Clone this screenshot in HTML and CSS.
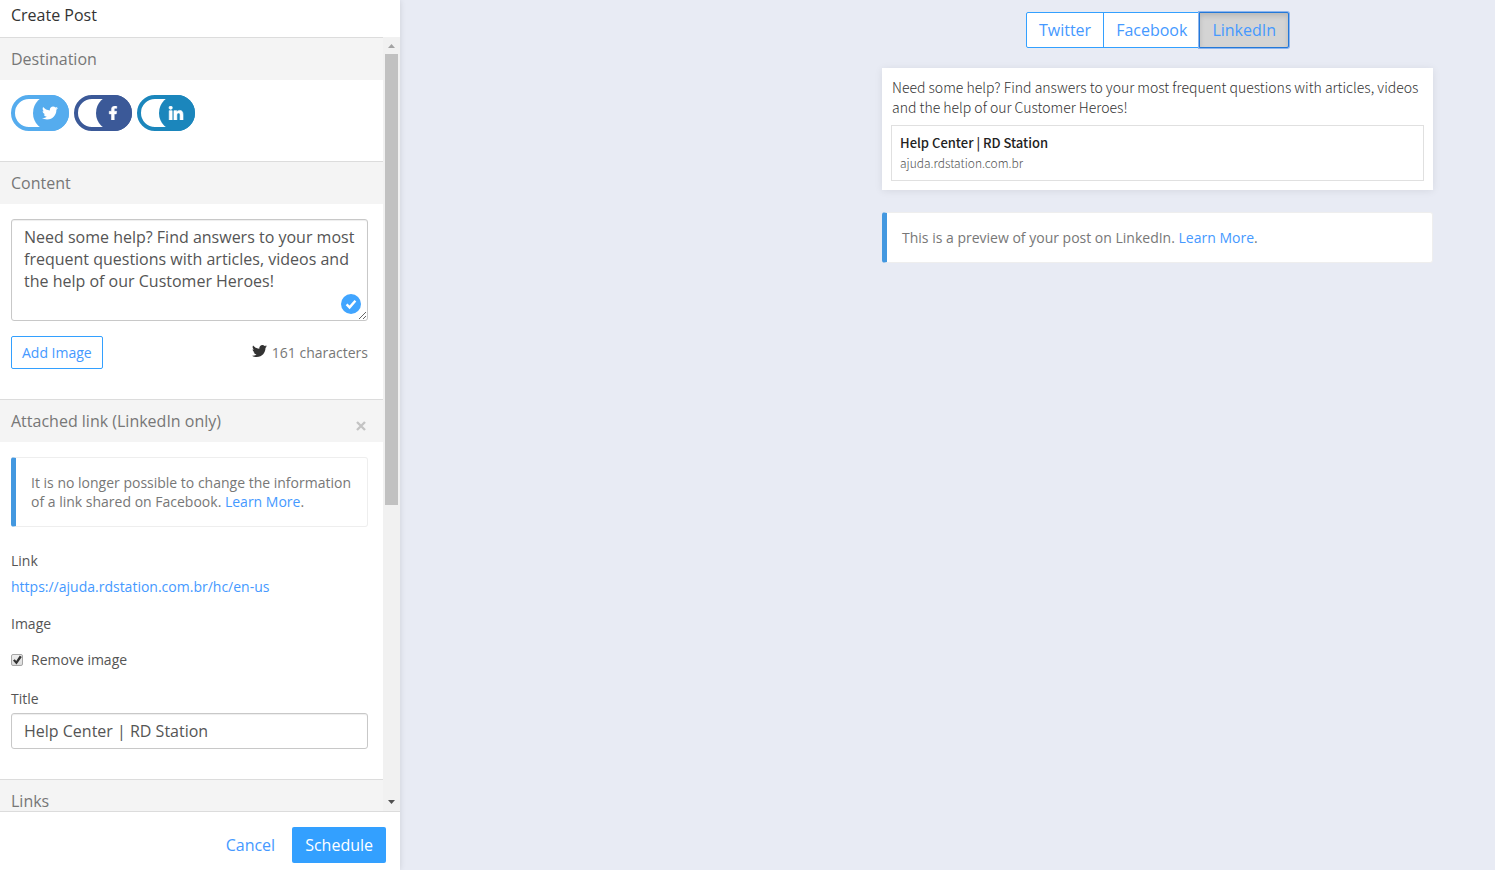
FILE: index.html
```html
<!DOCTYPE html>
<html lang="en">
<head>
    <meta charset="UTF-8">
    <meta name="viewport" content="width=device-width, initial-scale=1.0">
    <title>Create Post</title>
    <link rel="stylesheet" href="styles.css">
</head>
<body>
    <svg class="sprite" aria-hidden="true">
        <symbol id="icon-twitter" viewBox="0 0 512 512">
            <path d="M459.37 151.716c.325 4.548.325 9.097.325 13.645 0 138.72-105.583 298.558-298.558 298.558-59.452 0-114.68-17.219-161.137-47.106 8.447.974 16.568 1.299 25.34 1.299 49.055 0 94.213-16.568 130.274-44.832-46.132-.975-84.792-31.188-98.112-72.772 6.498.974 12.995 1.624 19.818 1.624 9.421 0 18.843-1.3 27.614-3.573-48.081-9.747-84.143-51.98-84.143-102.985v-1.299c13.969 7.797 30.214 12.67 47.431 13.319-28.264-18.843-46.781-51.005-46.781-87.391 0-19.492 5.197-37.36 14.294-52.954 51.655 63.675 129.3 105.258 216.365 109.807-1.624-7.797-2.599-15.918-2.599-24.04 0-57.828 46.782-104.934 104.934-104.934 30.213 0 57.502 12.67 76.67 33.137 23.715-4.548 46.456-13.32 66.599-25.34-7.798 24.366-24.366 44.833-46.132 57.827 21.117-2.273 41.584-8.122 60.426-16.243-14.292 20.791-32.161 39.308-52.628 54.253z"/>
        </symbol>
        <symbol id="icon-facebook" viewBox="0 0 320 512">
            <path d="M279.14 288l14.22-92.66h-88.91v-60.13c0-25.35 12.42-50.06 52.24-50.06h40.42V6.26S260.43 0 225.36 0c-73.22 0-121.08 44.38-121.08 124.72v70.62H22.89V288h81.39v224h100.17V288z"/>
        </symbol>
        <symbol id="icon-linkedin" viewBox="0 0 448 448">
            <path d="M100.28 448H7.4V148.9h92.88zM53.79 108.1C24.09 108.1 0 83.5 0 53.8a53.79 53.79 0 0 1 107.58 0c0 29.7-24.1 54.3-53.79 54.3zM447.9 448h-92.68V302.4c0-34.7-.7-79.2-48.29-79.2-48.29 0-55.69 37.7-55.69 76.7V448h-92.78V148.9h89.08v40.8h1.3c12.4-23.5 42.69-48.3 87.88-48.3 94 0 111.28 61.9 111.28 142.3V448z"/>
        </symbol>
    </svg>

    <div class="app">
        <aside class="sidebar">
            <h1 class="sidebar-title">Create Post</h1>

            <div class="sidebar-body">
                <form class="sidebar-scroll" id="post-form">
                    <section class="section">
                        <h2 class="section-head">Destination</h2>
                        <div class="section-content destinations">
                            <label class="toggle toggle-twitter">
                                <input type="checkbox" aria-label="Twitter" checked>
                                <span class="knob"><svg class="icon-tw"><use href="#icon-twitter"/></svg></span>
                            </label>
                            <label class="toggle toggle-facebook">
                                <input type="checkbox" aria-label="Facebook" checked>
                                <span class="knob"><svg class="icon-fb"><use href="#icon-facebook"/></svg></span>
                            </label>
                            <label class="toggle toggle-linkedin">
                                <input type="checkbox" aria-label="LinkedIn" checked>
                                <span class="knob"><svg class="icon-in"><use href="#icon-linkedin"/></svg></span>
                            </label>
                        </div>
                    </section>

                    <section class="section">
                        <h2 class="section-head">Content</h2>
                        <div class="section-content">
                            <div class="message">
                                <textarea class="form-control message-text" aria-label="Content">Need some help? Find answers to your most frequent questions with articles, videos and the help of our Customer Heroes!</textarea>
                                <svg class="message-check" viewBox="0 0 20 20" aria-hidden="true">
                                    <circle cx="10" cy="10" r="10"/>
                                    <path d="M5.6 10.4l3 3 5.8-6.6"/>
                                </svg>
                            </div>
                            <div class="message-bar">
                                <button type="button" class="btn btn-outline btn-small">Add Image</button>
                                <span class="counter"><svg class="icon-tw"><use href="#icon-twitter"/></svg>161 characters</span>
                            </div>
                        </div>
                    </section>

                    <section class="section">
                        <div class="section-head">
                            <h2 class="section-name">Attached link (LinkedIn only)</h2>
                            <button type="button" class="close" aria-label="Remove attached link">
                                <svg viewBox="0 0 10 10"><path d="M1 1l8 8M9 1l-8 8"/></svg>
                            </button>
                        </div>
                        <div class="section-content">
                            <div class="notice">It is no longer possible to change the information of a link shared on Facebook. <a href="#">Learn More</a>.</div>
                            <div class="field field-link">
                                <span>Link</span>
                                <a href="#">https://ajuda.rdstation.com.br/hc/en-us</a>
                            </div>
                            <div class="field field-image">
                                <span>Image</span>
                                <label class="check"><input type="checkbox" checked>Remove image</label>
                            </div>
                            <div class="field field-title">
                                <label for="link-title">Title</label>
                                <input type="text" class="form-control" id="link-title" value="Help Center | RD Station">
                            </div>
                        </div>
                    </section>

                    <section class="section">
                        <h2 class="section-head">Links</h2>
                    </section>
                </form>

                <div class="scrollbar" aria-hidden="true">
                    <svg class="scroll-arrow scroll-up" viewBox="0 0 17 17"><path d="M5 11h7l-3.500-4z"/></svg>
                    <div class="scroll-track"><div class="scroll-thumb"></div></div>
                    <svg class="scroll-arrow" viewBox="0 0 17 17"><path d="M5 6h7l-3.500 4z"/></svg>
                </div>
            </div>

            <div class="sidebar-footer">
                <button type="button" class="btn btn-link">Cancel</button>
                <button type="submit" class="btn btn-primary" form="post-form">Schedule</button>
            </div>
        </aside>

        <main class="preview">
            <div class="preview-column">
                <div class="btn-group">
                    <button type="button" class="btn btn-outline">Twitter</button>
                    <button type="button" class="btn btn-outline">Facebook</button>
                    <button type="button" class="btn btn-outline active">LinkedIn</button>
                </div>

                <article class="post">
                    <p class="post-text">Need some help? Find answers to your most frequent questions with articles, videos and the help of our Customer Heroes!</p>
                    <div class="post-link">
                        <strong class="post-link-title">Help Center | RD Station</strong>
                        <span class="post-link-domain">ajuda.rdstation.com.br</span>
                    </div>
                </article>

                <div class="notice">This is a preview of your post on LinkedIn. <a href="#">Learn More</a>.</div>
            </div>
        </main>
    </div>
</body>
</html>
```

FILE: styles.css
```css
* {
    box-sizing: border-box;
}
body {
    margin: 0;
    font-family: 'Open Sans', sans-serif;
    font-size: 14px;
    line-height: 20px;
    color: #555;
    background: #e8ebf4;
}
h1, h2, p {
    margin: 0;
    font-weight: 400;
}
a {
    color: #4599ff;
    text-decoration: none;
}
button, input, textarea {
    font-family: inherit;
    margin: 0;
}
.sprite {
    display: none;
}
.app {
    display: flex;
    height: 100vh;
}

/* Sidebar */
.sidebar {
    display: flex;
    flex-direction: column;
    flex: none;
    width: 400px;
    background: #fff;
    box-shadow: 0 0 6px rgba(0, 0, 0, 0.12);
}
.sidebar-title {
    padding: 4px 11px 11px;
    font-size: 16px;
    line-height: 22px;
    color: #333;
}
.sidebar-body {
    display: flex;
    flex: 1;
    min-height: 0;
}
.sidebar-scroll {
    flex: 1;
    overflow-y: auto;
    scrollbar-width: none;
}
.section {
    border-top: 1px solid #dcdcdc;
}
.section-head {
    display: flex;
    align-items: center;
    justify-content: space-between;
    height: 42px;
    padding: 0 16px 0 11px;
    background: #f4f4f4;
    font-size: 16px;
    color: #777;
}
.section-name {
    font-size: 16px;
}
.section-content {
    padding: 15px 15px 30px 11px;
}
.close {
    display: flex;
    padding: 9px 1px 0;
    border: 0;
    background: none;
    cursor: pointer;
}
.close svg {
    width: 10px;
    height: 10px;
    fill: none;
    stroke: #c3c3c3;
    stroke-width: 2.4;
}

/* Destination toggles */
.destinations {
    display: flex;
    gap: 5px;
}
.toggle {
    display: flex;
    justify-content: flex-end;
    align-items: center;
    position: relative;
    width: 58px;
    height: 36px;
    border: 4px solid;
    border-radius: 18px;
    cursor: pointer;
}
.toggle input {
    position: absolute;
    inset: 0;
    appearance: none;
}
.toggle-twitter {
    color: #55acee;
}
.toggle-facebook {
    color: #3b5998;
}
.toggle-linkedin {
    color: #1b86bc;
}
.knob {
    display: flex;
    align-items: center;
    justify-content: center;
    flex: none;
    width: 36px;
    height: 36px;
    margin-right: -4px;
    padding-right: 2px;
    border-radius: 50%;
    background: currentColor;
}
.knob svg {
    fill: #fff;
}
.icon-tw {
    width: 16px;
    height: 16px;
}
.icon-fb {
    width: 10px;
    height: 14px;
    stroke: #fff;
    stroke-width: 20;
}
.icon-in {
    width: 16px;
    height: 14px;
    stroke: #fff;
    stroke-width: 20;
}

/* Form controls */
.form-control {
    display: block;
    width: 100%;
    height: 36px;
    padding: 6px 12px;
    border: 1px solid #c8c8c8;
    border-radius: 3px;
    background: #fff;
    box-shadow: inset 0 1px 1px rgba(0, 0, 0, 0.07);
    font-size: 16px;
    line-height: 22px;
    color: #555;
    outline: none;
}
.message {
    position: relative;
}
.message-text {
    height: 102px;
    resize: vertical;
}
.message-check {
    position: absolute;
    right: 7px;
    bottom: 7px;
    width: 20px;
    height: 20px;
    fill: #41a5ff;
}
.message-check path {
    fill: none;
    stroke: #fff;
    stroke-width: 2.4;
}
.message-bar {
    display: flex;
    align-items: center;
    justify-content: space-between;
    margin-top: 15px;
}
.counter {
    display: flex;
    gap: 5px;
    color: #777;
}
.counter svg {
    width: 15px;
    fill: #333;
}
.field {
    display: flex;
    flex-direction: column;
}
.field-link {
    gap: 6px;
    margin-top: 24px;
}
.field-image {
    gap: 16px;
    margin-top: 17px;
}
.field-title {
    gap: 4px;
    margin-top: 19px;
}
.check {
    display: flex;
    align-items: center;
    gap: 8px;
}
.check input {
    display: grid;
    width: 12px;
    height: 12px;
    border: 1px solid #a5a5a5;
    border-radius: 2px;
    background: linear-gradient(#efefef, #dcdcdc);
    appearance: none;
}
.check input:checked::before {
    content: "";
    background: #333;
    clip-path: polygon(10% 55%, 28% 42%, 42% 60%, 78% 5%, 98% 20%, 45% 95%);
}

/* Buttons */
.btn {
    height: 36px;
    padding: 0 12px;
    border: 1px solid transparent;
    border-radius: 2px;
    background: none;
    font-size: 16px;
    line-height: 22px;
    color: #4599ff;
    cursor: pointer;
}
.btn-outline {
    border-color: #33a0ff;
    background: #fff;
}
.btn-small {
    height: 33px;
    padding: 0 10px;
    font-size: 14px;
}
.btn-primary {
    background: #33a0ff;
    color: #fff;
}
.btn-group {
    display: flex;
    justify-content: center;
}
.btn-group .btn {
    border-radius: 0;
}
.btn-group .btn + .btn {
    margin-left: -1px;
}
.btn-group .btn:first-child {
    border-radius: 2px 0 0 2px;
}
.btn-group .btn:last-child {
    border-radius: 0 2px 2px 0;
}
.btn-group .active {
    border-color: #2378d8;
    background: #d4d4d4;
    box-shadow: inset 0 3px 5px rgba(0, 0, 0, 0.125), 0 0 0 1px #8db5ee;
}

/* Drawn scrollbar */
.scrollbar {
    display: flex;
    flex-direction: column;
    width: 17px;
    background: #f1f1f1;
}
.scroll-arrow {
    width: 17px;
    height: 17px;
    fill: #505050;
}
.scroll-up {
    fill: #a3a3a3;
}
.scroll-track {
    flex: 1;
    padding: 0 2px;
}
.scroll-thumb {
    height: 61%;
    background: #c1c1c1;
}
.sidebar-footer {
    display: flex;
    justify-content: flex-end;
    gap: 4px;
    padding: 15px 14px 7px;
    border-top: 1px solid #dcdcdc;
}

/* Notice */
.notice {
    padding: 15px;
    border: 1px solid #eee;
    border-left: 5px solid #4398e0;
    border-radius: 3px;
    background: #fff;
    line-height: 19px;
    color: #777;
}

/* Preview */
.preview {
    flex: 1;
    padding: 12px 0 0 420px;
}
.preview-column {
    max-width: 551px;
    margin: 0 auto;
}
.post {
    margin: 20px 0 22px;
    padding: 9px;
    background: #fff;
    box-shadow: 0 1px 8px rgba(0, 0, 0, 0.08);
    font-family: 'Noto Sans CJK SC', sans-serif;
    color: #333;
}
.post-text {
    padding: 0 1px;
    font-weight: 300;
}
.post-link {
    display: flex;
    flex-direction: column;
    margin-top: 8px;
    padding: 7px 8px;
    border: 1px solid #e0e0e0;
}
.post-link-title {
    font-size: 13px;
    font-weight: 500;
    color: #222;
}
.post-link-domain {
    font-size: 12px;
    font-weight: 300;
    color: #555;
}
```
